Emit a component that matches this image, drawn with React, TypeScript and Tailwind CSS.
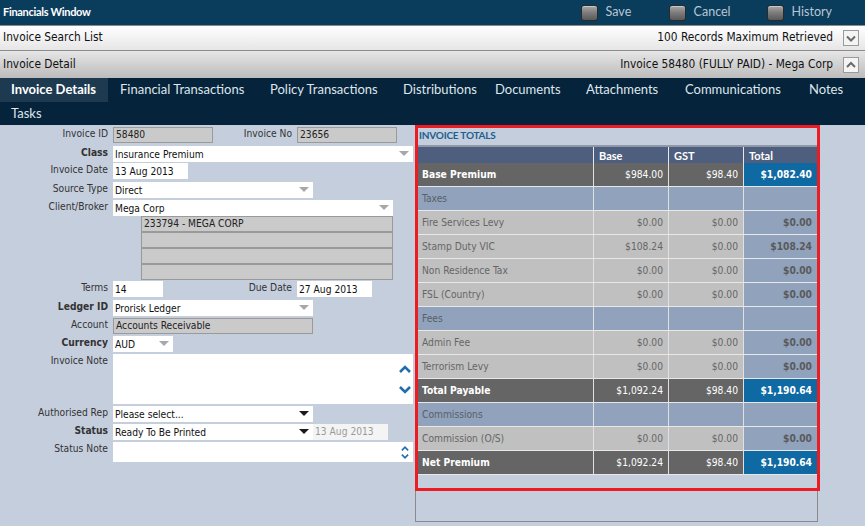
import React from "react";

const ui = { fontFamily: '"DejaVu Sans Condensed", "DejaVu Sans", sans-serif' };
const head = { fontFamily: 'Lato, "Open Sans", sans-serif' };

function ToolButton({ label, w }: { label: string; w?: string }) {
  return (
    <div className={`flex items-center gap-[8px] ${w ?? ""}`}>
      <div className="h-[16px] w-[17px] rounded-[3px] border border-[#2a2a2a] bg-gradient-to-b from-[#a8a8a8] via-[#7a7a7a] to-[#5a5a5a] shadow-[inset_0_1px_0_#c8c8c8]" />
      <span className="text-[12.5px] text-[#b8c6d4]">{label}</span>
    </div>
  );
}

function Collapse({ up }: { up?: boolean }) {
  return (
    <div className="flex h-[16px] w-[16px] items-center justify-center border border-[#9a9a9a] bg-[#f4f4f4]">
      <svg width="10" height="7" viewBox="0 0 10 7">
        <path
          d={up ? "M1 6 L5 2 L9 6" : "M1 1.5 L5 5.5 L9 1.5"}
          fill="none"
          stroke="#6a6a6a"
          strokeWidth="2"
        />
      </svg>
    </div>
  );
}

function Arrow({ dark }: { dark?: boolean }) {
  return (
    <svg width="10" height="6" viewBox="0 0 10 6" className="shrink-0">
      <path d="M0 0 L10 0 L5 5 Z" fill={dark ? "#1a1a1a" : "#a8a8a8"} />
    </svg>
  );
}

function Chevron({ up, small }: { up?: boolean; small?: boolean }) {
  const w = small ? 8 : 12;
  const h = small ? 5 : 8;
  return (
    <svg width={w} height={h} viewBox="0 0 12 8">
      <path
        d={up ? "M1 7 L6 2 L11 7" : "M1 1 L6 6 L11 1"}
        fill="none"
        stroke="#1f6fae"
        strokeWidth="2.6"
      />
    </svg>
  );
}

function Label({ text, bold, w = "w-[113px]" }: { text: string; bold?: boolean; w?: string }) {
  return (
    <div className={`${w} shrink-0 pr-[5px] text-right leading-[14px] text-[#333] ${bold ? "font-bold text-[#111]" : ""}`}>
      {text}
    </div>
  );
}

function ReadOnly({ value, w }: { value: string; w: string }) {
  return (
    <div className={`${w} h-[16px] border border-[#9a9a9a] bg-[#cacaca] pl-[2px] leading-[14px] text-[#222]`}>
      {value}
    </div>
  );
}

function Text({ value, w }: { value: string; w: string }) {
  return <div className={`${w} h-[16px] bg-white pl-[2px] leading-[17px] text-[#111]`}>{value}</div>;
}

function Select({ value, w, dark }: { value: string; w: string; dark?: boolean }) {
  return (
    <div className={`${w} flex h-[16px] items-center justify-between bg-white pl-[2px] pr-[4px] text-[#111]`}>
      <span className="leading-[17px]">{value}</span>
      <Arrow dark={dark} />
    </div>
  );
}

type Row = {
  label: string;
  base?: string;
  gst?: string;
  total?: string;
  kind: "strong" | "section" | "line";
};

const rows: Row[] = [
  { label: "Base Premium", base: "$984.00", gst: "$98.40", total: "$1,082.40", kind: "strong" },
  { label: "Taxes", kind: "section" },
  { label: "Fire Services Levy", base: "$0.00", gst: "$0.00", total: "$0.00", kind: "line" },
  { label: "Stamp Duty VIC", base: "$108.24", gst: "$0.00", total: "$108.24", kind: "line" },
  { label: "Non Residence Tax", base: "$0.00", gst: "$0.00", total: "$0.00", kind: "line" },
  { label: "FSL (Country)", base: "$0.00", gst: "$0.00", total: "$0.00", kind: "line" },
  { label: "Fees", kind: "section" },
  { label: "Admin Fee", base: "$0.00", gst: "$0.00", total: "$0.00", kind: "line" },
  { label: "Terrorism Levy", base: "$0.00", gst: "$0.00", total: "$0.00", kind: "line" },
  { label: "Total Payable", base: "$1,092.24", gst: "$98.40", total: "$1,190.64", kind: "strong" },
  { label: "Commissions", kind: "section" },
  { label: "Commission (O/S)", base: "$0.00", gst: "$0.00", total: "$0.00", kind: "line" },
  { label: "Net Premium", base: "$1,092.24", gst: "$98.40", total: "$1,190.64", kind: "strong" },
];

function TotalsRow({ r }: { r: Row }) {
  const rowBg =
    r.kind === "strong" ? "bg-[#656565] text-white font-bold" : r.kind === "section" ? "bg-[#90a2bc] text-[#5a5f68]" : "bg-[#c0c0c0] text-[#666]";
  const numCls = r.kind === "strong" ? "font-normal text-white" : "";
  const totalBg =
    r.kind === "strong" ? "bg-[#0f69a3] text-white font-bold" : r.kind === "section" ? "bg-[#90a2bc]" : "bg-[#90a2bc] font-bold text-[#5a5a5a]";
  return (
    <div className={`grid h-[24px] grid-cols-[175px_75px_75px_74px] border-b border-[#e8e8e8] ${rowBg}`}>
      <div className="flex items-center pl-[4px]">{r.label}</div>
      <div className={`flex items-center justify-end border-l border-[#e0e0e0] pr-[5px] ${numCls}`}>{r.base}</div>
      <div className={`flex items-center justify-end border-l border-[#e0e0e0] pr-[5px] ${numCls}`}>{r.gst}</div>
      <div className={`flex items-center justify-end border-l border-[#e0e0e0] pr-[5px] ${totalBg}`}>{r.total}</div>
    </div>
  );
}

const tabs: [string, string][] = [
  ["Financial Transactions", "w-[150px]"],
  ["Policy Transactions", "w-[133px]"],
  ["Distributions", "w-[92px]"],
  ["Documents", "w-[91px]"],
  ["Attachments", "w-[99px]"],
  ["Communications", "w-[124px]"],
  ["Notes", "w-[50px]"],
];

export default function App() {
  return (
    <div className="flex h-[526px] w-[865px] flex-col overflow-hidden bg-[#c5cedd]">
      <div className="flex h-[25px] shrink-0 items-center justify-between bg-[#0a3c5c] pl-[3px] pr-[33px]" style={head}>
        <span className="text-[11px] font-bold tracking-[-0.3px] text-white">Financials Window</span>
        <div className="flex items-center">
          <ToolButton label="Save" w="w-[88px]" />
          <ToolButton label="Cancel" w="w-[98px]" />
          <ToolButton label="History" />
        </div>
      </div>

      <div
        className="flex h-[26px] shrink-0 items-center justify-between border-y border-[#8c8c8c] bg-gradient-to-b from-[#ffffff] to-[#e6e6e6] pl-[3px] pr-[6px] text-[11.8px] text-[#111]"
        style={ui}
      >
        <span>Invoice Search List</span>
        <div className="flex items-center gap-[10px]">
          <span>100 Records Maximum Retrieved</span>
          <Collapse />
        </div>
      </div>

      <div
        className="flex h-[27px] shrink-0 items-center justify-between bg-gradient-to-b from-[#e6e6e6] to-[#bcbcbc] pl-[3px] pr-[6px] text-[11.8px] text-[#111]"
        style={ui}
      >
        <span>Invoice Detail</span>
        <div className="flex items-center gap-[10px]">
          <span>Invoice 58480 (FULLY PAID) - Mega Corp</span>
          <Collapse up />
        </div>
      </div>

      <div className="shrink-0 bg-[#05233a] text-[13px] text-[#dfe6ec]" style={head}>
        <div className="flex h-[24px] items-center">
          <div className="flex h-full w-[108px] items-center bg-[#1d3a50] pl-[11px] font-bold text-white">Invoice Details</div>
          <div className="flex items-center pl-[12px]">
            {tabs.map(([t, w]) => (
              <span key={t} className={`${w} shrink-0`}>
                {t}
              </span>
            ))}
          </div>
        </div>
        <div className="flex h-[23px] items-center pl-[11px]">Tasks</div>
      </div>

      <div className="flex min-h-0 flex-1">
        <div className="flex w-[415px] shrink-0 flex-col pt-[2px] text-[10.2px]" style={ui}>
          <div className="flex items-start">
            <Label text="Invoice ID" />
            <ReadOnly value="58480" w="w-[100px]" />
            <Label text="Invoice No" w="w-[84px]" />
            <ReadOnly value="23656" w="w-[100px]" />
          </div>
          <div className="mt-[3px] flex items-start">
            <Label text="Class" bold />
            <Select value="Insurance Premium" w="w-[300px]" />
          </div>
          <div className="mt-[1px] flex items-start">
            <Label text="Invoice Date" />
            <Text value="13 Aug 2013" w="w-[75px]" />
          </div>
          <div className="mt-[3px] flex items-start">
            <Label text="Source Type" />
            <Select value="Direct" w="w-[200px]" />
          </div>
          <div className="mt-[2px] flex items-start">
            <Label text="Client/Broker" />
            <Select value="Mega Corp" w="w-[280px]" />
          </div>
          <div className="ml-[141px] flex w-[252px] flex-col">
            {["233794 - MEGA CORP", "", "", ""].map((v, i) => (
              <div key={i} className="h-[16px] border border-[#9a9a9a] bg-[#cacaca] pl-[2px] leading-[14px] text-[#222]">
                {v}
              </div>
            ))}
          </div>
          <div className="mt-[1px] flex items-start">
            <Label text="Terms" />
            <Text value="14" w="w-[50px]" />
            <Label text="Due Date" w="w-[134px]" />
            <Text value="27 Aug 2013" w="w-[75px]" />
          </div>
          <div className="mt-[3px] flex items-start">
            <Label text="Ledger ID" bold />
            <Select value="Prorisk Ledger" w="w-[200px]" />
          </div>
          <div className="mt-[2px] flex items-start">
            <Label text="Account" />
            <ReadOnly value="Accounts Receivable" w="w-[200px]" />
          </div>
          <div className="mt-[2px] flex items-start">
            <Label text="Currency" bold />
            <Select value="AUD" w="w-[60px]" />
          </div>
          <div className="mt-[2px] flex items-start">
            <Label text="Invoice Note" />
            <div className="flex h-[50px] w-[300px] flex-col items-end justify-center gap-[13px] bg-white pr-[2px]">
              <Chevron up />
              <Chevron />
            </div>
          </div>
          <div className="mt-[2px] flex items-start">
            <Label text="Authorised Rep" />
            <Select value="Please select..." w="w-[200px]" dark />
          </div>
          <div className="mt-[2px] flex items-start">
            <Label text="Status" bold />
            <Select value="Ready To Be Printed" w="w-[200px]" dark />
            <div className="h-[16px] w-[75px] bg-[#f4f4f4] pl-[2px] leading-[16px] text-[#9a9a9a]">13 Aug 2013</div>
          </div>
          <div className="mt-[2px] flex items-start">
            <Label text="Status Note" />
            <div className="flex h-[20px] w-[300px] flex-col items-end justify-center gap-[3px] bg-white pr-[4px]">
              <Chevron up small />
              <Chevron small />
            </div>
          </div>
        </div>

        <div className="relative mr-[48px] mb-[4px] flex flex-1 flex-col border border-[#8a8a8a] border-t-0 text-[10.2px]" style={ui}>
          <div className="pointer-events-none absolute left-[-1px] right-[-3px] top-0 h-[366px] border-[3px] border-[#ec1c24]" />
          <div className="ml-[2px] flex h-[22px] items-center border-b-2 border-[#8f98a6] pl-[1px] text-[10px] font-bold tracking-[-0.2px] text-[#1d5f90]" style={head}>
            INVOICE TOTALS
          </div>
          <div className="ml-[2px] flex flex-col">
            <div className="grid h-[16px] grid-cols-[175px_75px_75px_74px] bg-[#4e5e7e] text-[11px] font-bold text-white" style={head}>
              <div />
              <div className="border-l border-[#e8e8e8] pl-[5px] leading-[17px]">Base</div>
              <div className="border-l border-[#e8e8e8] pl-[5px] leading-[17px]">GST</div>
              <div className="border-l border-[#e8e8e8] pl-[5px] leading-[17px]">Total</div>
            </div>
            {rows.map((r) => (
              <TotalsRow key={r.label} r={r} />
            ))}
          </div>
        </div>
      </div>
    </div>
  );
}
